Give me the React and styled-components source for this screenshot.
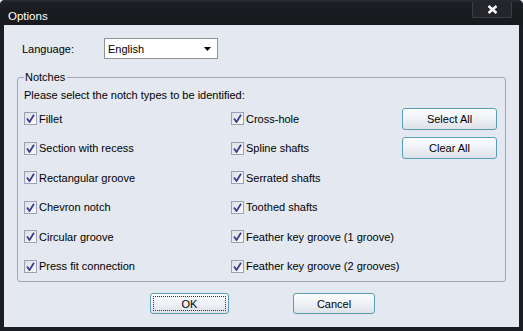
import React from "react";
import styled, { createGlobalStyle } from "styled-components";

const GlobalStyle = createGlobalStyle`
  html, body {
    margin: 0;
    padding: 0;
    background: #e4e8f0;
  }
  body {
    font-family: "Liberation Sans", Arial, sans-serif;
    font-size: 11px;
    color: #000;
  }
`;

const Window = styled.div`
  width: 523px;
  height: 331px;
  display: flex;
  flex-direction: column;
  box-sizing: border-box;
  background: #1b1d22;
  border-radius: 5px 5px 0 0;
  overflow: hidden;
  box-shadow: inset 0 1px 0 #5a5d66;
`;

const TitleBar = styled.div`
  height: 25px;
  flex: none;
  display: flex;
  align-items: flex-start;
  justify-content: space-between;
  padding: 0 11px 0 8px;
  box-sizing: border-box;
  background: linear-gradient(#2a2c32 0, #1c1e23 3px, #17191d 100%);
`;

const Title = styled.span`
  color: #fff;
  font-size: 11.5px;
  line-height: 14px;
  margin-top: 9px;
`;

const CloseButton = styled.div`
  width: 40px;
  height: 16px;
  margin-top: 2px;
  box-sizing: border-box;
  border: 1px solid #3a3d45;
  border-top: none;
  background: #24262c;
  display: flex;
  align-items: center;
  justify-content: center;
`;

const Body = styled.div`
  flex: 1;
  margin: 0 4px 4px 4px;
  background: #e4e8f0;
  display: flex;
  flex-direction: column;
  padding: 13px 0 0 0;
`;

const LanguageRow = styled.div`
  display: flex;
  align-items: center;
  padding-left: 18px;
  height: 21px;
`;

const FieldLabel = styled.span`
  width: 82px;
`;

const Select = styled.div`
  width: 114px;
  height: 21px;
  box-sizing: border-box;
  border: 1px solid #8e9299;
  background: #fff;
  display: flex;
  align-items: center;
  justify-content: space-between;
  padding: 0 6px 0 3px;
`;

const Group = styled.fieldset`
  margin: 11px 13px 0 13px;
  padding: 0 6px 1px 6px;
  border: 1px solid #a3a7ae;
  border-radius: 3px;
  height: 212px;
  box-sizing: border-box;
`;

const Legend = styled.legend`
  padding: 0 2px 0 1px;
  margin-left: 0;
  line-height: 14px;
`;

const Intro = styled.div`
  margin: 3px 0 1px 0;
  height: 16px;
  line-height: 16px;
`;

const Grid = styled.div`
  display: grid;
  grid-template-columns: 207px 171px 94px;
  grid-auto-rows: 29.5px;
  align-items: center;
`;

const Item = styled.label`
  display: flex;
  align-items: center;
  gap: 2px;
  white-space: nowrap;
`;

const Box = styled.span`
  width: 13px;
  height: 13px;
  box-sizing: border-box;
  border: 1px solid #9aa0b6;
  background: linear-gradient(135deg, #dcdfe8, #fbfbfd);
  display: flex;
  align-items: center;
  justify-content: center;
`;

const Button = styled.button`
  font: inherit;
  color: #000;
  width: ${(p) => p.$w}px;
  height: ${(p) => p.$h || 22}px;
  border: 1px solid #5c9db3;
  border-radius: 3px;
  background: linear-gradient(#fcfdfe 0%, #eef1f5 50%, #dde2e9 100%);
  padding: 0;
  display: flex;
  align-items: center;
  justify-content: center;
  position: relative;
  justify-self: start;
`;

const Focus = styled.span`
  position: absolute;
  inset: 2px;
  border: 1px dotted #333;
`;

const Footer = styled.div`
  display: flex;
  justify-content: flex-start;
  gap: 64px;
  padding-left: 146px;
  margin-top: 11px;
`;

const Check = () => (
  <Box>
    <svg width="9" height="9" viewBox="0 0 9 9">
      <path d="M1 4.5 L3.5 8 L8 0.8" fill="none" stroke="#3a3e8e" strokeWidth="1.8" />
    </svg>
  </Box>
);

const left = [
  "Fillet",
  "Section with recess",
  "Rectangular groove",
  "Chevron notch",
  "Circular groove",
  "Press fit connection",
];

const right = [
  "Cross-hole",
  "Spline shafts",
  "Serrated shafts",
  "Toothed shafts",
  "Feather key groove (1 groove)",
  "Feather key groove (2 grooves)",
];

export default function App() {
  const rows = left.map((l, i) => (
    <React.Fragment key={l}>
      <Item>
        <Check />
        {l}
      </Item>
      <Item>
        <Check />
        {right[i]}
      </Item>
      {i === 0 ? (
        <Button $w={95}>Select All</Button>
      ) : i === 1 ? (
        <Button $w={95}>Clear All</Button>
      ) : (
        <span />
      )}
    </React.Fragment>
  ));

  return (
    <Window>
      <GlobalStyle />
      <TitleBar>
        <Title>Options</Title>
        <CloseButton>
          <svg width="11" height="9" viewBox="0 0 11 9">
            <path d="M1.5 1 L9.5 8 M9.5 1 L1.5 8" stroke="#fff" strokeWidth="2.4" />
          </svg>
        </CloseButton>
      </TitleBar>
      <Body>
        <LanguageRow>
          <FieldLabel>Language:</FieldLabel>
          <Select>
            <span>English</span>
            <svg width="7" height="4" viewBox="0 0 7 4">
              <path d="M0 0 H7 L3.5 4 Z" fill="#000" />
            </svg>
          </Select>
        </LanguageRow>
        <Group>
          <Legend>Notches</Legend>
          <Intro>Please select the notch types to be identified:</Intro>
          <Grid>{rows}</Grid>
        </Group>
        <Footer>
          <Button $w={79} $h={21}>
            <Focus />
            OK
          </Button>
          <Button $w={82} $h={21}>Cancel</Button>
        </Footer>
      </Body>
    </Window>
  );
}
